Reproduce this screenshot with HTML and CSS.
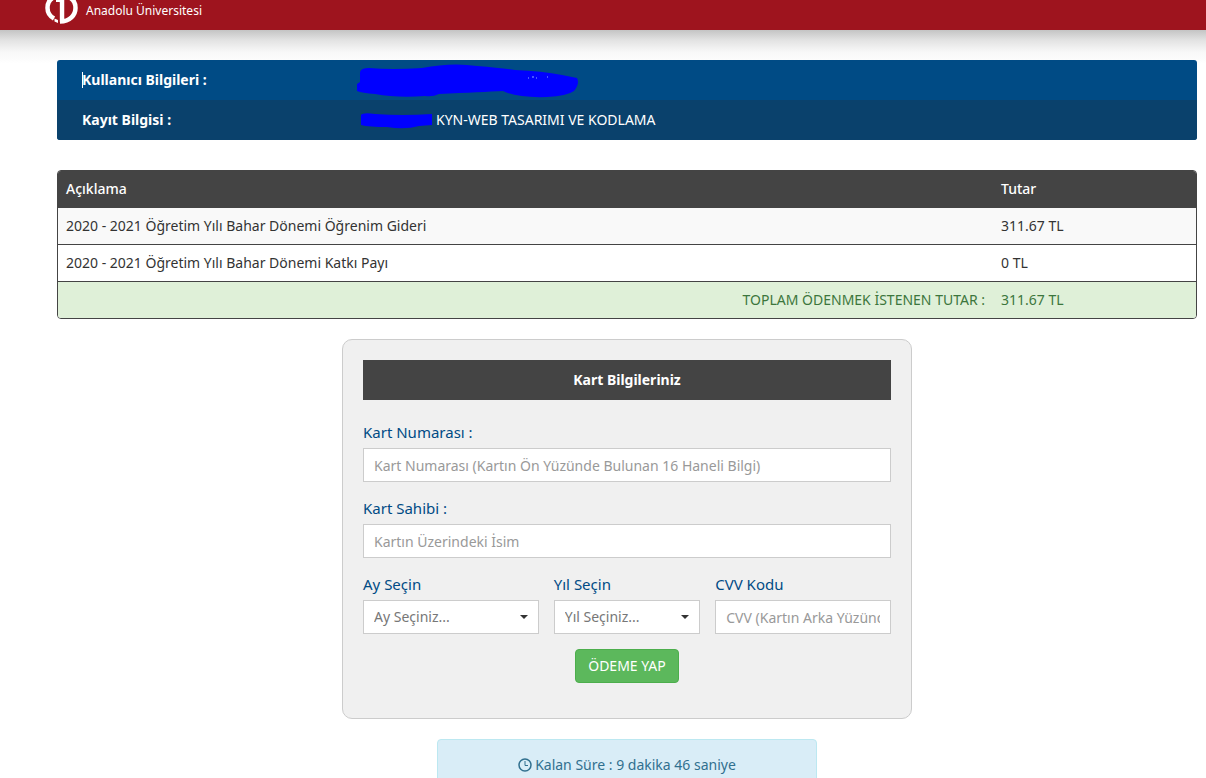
FILE: index.html
```html
<!DOCTYPE html>
<html lang="tr">
<head>
<meta charset="utf-8">
<meta name="viewport" content="width=device-width, initial-scale=1">
<title>Anadolu Üniversitesi</title>
<link rel="stylesheet" href="styles.css">
</head>
<body>
<header class="topbar">
  <svg class="logo" viewBox="0 0 34 24" aria-hidden="true">
    <g fill="none" stroke="#fff">
      <path d="M12 -4C5 -2 2.500 3 2.500 8C2.500 12 4.500 16 9 18.500" stroke-width="4.500"/>
      <path d="M21 -4C28 -2 30.500 3 30.500 8C30.500 15 25 21.500 15 21.500" stroke-width="4.500"/>
      <path d="M17 0V22" stroke-width="4.500"/>
      <path d="M11 1H16" stroke-width="2"/>
    </g>
    <path d="M9.500 18.500l3.500 1.500v3l-3.500-1.500z" fill="#fff"/>
    <path d="M13.800 3v21" stroke="#9e141e"/>
  </svg>
  <span class="brand">Anadolu Üniversitesi</span>
</header>

<main class="page">
  <dl class="info">
    <div class="info-row">
      <dt><span class="cursor"></span>Kullanıcı Bilgileri :</dt>
      <dd>
        <svg class="mark-long" viewBox="0 0 222 36" aria-hidden="true">
          <path d="M0 22L3 20L3 10Q4 6 12 6Q35 8 65 6Q95 0 120 4Q145 6 158 8Q185 9 205 13L220 16Q223 22 217 29Q210 34 190 35Q160 36 146 29Q125 30 82 32Q76 35 68 34Q40 36 18 32Q5 31 0 29Z" fill="#00f"/>
          <path d="M171 16h1m3-1h2m2 1h1m10-1h1" stroke="#8af"/>
        </svg>
      </dd>
    </div>
    <div class="info-row info-row-dark">
      <dt>Kayıt Bilgisi :</dt>
      <dd>
        <svg class="mark-short" viewBox="0 0 76 18" aria-hidden="true">
          <path d="M4 4Q6 1 18 3Q45 5 75 3L75 14L62 15Q48 19 30 16Q12 16 4 14Z" fill="#00f"/>
        </svg>
        <span>KYN-WEB TASARIMI VE KODLAMA</span>
      </dd>
    </div>
  </dl>

  <table class="fees">
    <thead>
      <tr><th scope="col">Açıklama</th><th scope="col" class="amount">Tutar</th></tr>
    </thead>
    <tbody>
      <tr class="striped"><td>2020 - 2021 Öğretim Yılı Bahar Dönemi Öğrenim Gideri</td><td>311.67 TL</td></tr>
      <tr><td>2020 - 2021 Öğretim Yılı Bahar Dönemi Katkı Payı</td><td>0 TL</td></tr>
    </tbody>
    <tfoot>
      <tr><td class="total-label">TOPLAM ÖDENMEK İSTENEN TUTAR :</td><td>311.67 TL</td></tr>
    </tfoot>
  </table>

  <form class="card">
    <h2 class="card-title">Kart Bilgileriniz</h2>
    <div class="field">
      <label for="number">Kart Numarası :</label>
      <input id="number" type="text" placeholder="Kart Numarası (Kartın Ön Yüzünde Bulunan 16 Haneli Bilgi)">
    </div>
    <div class="field">
      <label for="owner">Kart Sahibi :</label>
      <input id="owner" type="text" placeholder="Kartın Üzerindeki İsim">
    </div>
    <div class="field-row">
      <div class="field">
        <label for="month">Ay Seçin</label>
        <div class="select">
          <select id="month"><option>Ay Seçiniz...</option></select>
          <svg class="caret" viewBox="0 0 8 4" aria-hidden="true"><path d="M0 0H8L4 4Z" fill="#333"/></svg>
        </div>
      </div>
      <div class="field">
        <label for="year">Yıl Seçin</label>
        <div class="select">
          <select id="year"><option>Yıl Seçiniz...</option></select>
          <svg class="caret" viewBox="0 0 8 4" aria-hidden="true"><path d="M0 0H8L4 4Z" fill="#333"/></svg>
        </div>
      </div>
      <div class="field">
        <label for="cvv">CVV Kodu</label>
        <input id="cvv" type="text" placeholder="CVV (Kartın Arka Yüzünde Bulunan 3 Haneli Kod)">
      </div>
    </div>
    <button class="pay" type="button">ÖDEME YAP</button>
  </form>

  <div class="timer" role="status">
    <svg class="clock" viewBox="0 0 14 14" aria-hidden="true"><circle cx="7" cy="7" r="6" fill="none" stroke="#31708f" stroke-width="1.500"/><path d="M7 3V7.500H10" fill="none" stroke="#31708f"/></svg>
    <span>Kalan Süre : 9 dakika 46 saniye</span>
  </div>
</main>
</body>
</html>
```
FILE: styles.css
```css
* {
  box-sizing: border-box;
}

body {
  margin: 0;
  background: #fff;
  color: #333;
  font: 14px/20px "Noto Sans", "Open Sans", sans-serif;
}

.topbar {
  display: flex;
  align-items: flex-start;
  gap: 7px;
  height: 30px;
  padding-left: 45px;
  background: #9e141e;
  color: #fff;
}

.logo {
  width: 34px;
  height: 24px;
}

.brand {
  font-size: 12px;
  line-height: 22px;
}

.page {
  display: flex;
  flex-direction: column;
  padding: 30px 9px 20px 57px;
  background: linear-gradient(#c4c4c4, #e2e2e2 10px, #f8f8f8 22px, #fff 34px);
}

.info {
  position: relative;
  margin: 0 0 30px;
  overflow: hidden;
  border-radius: 3px;
  background: #004b85;
  color: #fff;
}

.info-row {
  display: grid;
  grid-template-columns: 1fr 3fr;
  align-items: center;
  height: 40px;
}

.info-row-dark {
  background: #0a416c;
}

.info dt {
  padding-left: 25px;
  font-weight: 700;
}

.cursor {
  position: absolute;
  width: 1px;
  height: 16px;
  margin-top: 2px;
  background: #fff;
}

.info dd {
  display: flex;
  align-items: center;
  gap: 3px;
  margin: 0;
  padding-left: 15px;
}

.mark-long {
  width: 222px;
  height: 36px;
}

.mark-short {
  width: 76px;
  height: 18px;
}

.fees {
  width: 100%;
  margin-bottom: 20px;
  overflow: hidden;
  border: 1px solid #444;
  border-radius: 4px;
  border-spacing: 0;
}

.fees th,
.fees td {
  padding: 8px;
  border-top: 1px solid #444;
  text-align: left;
}

.fees th {
  border-top: 0;
  background: #444;
  color: #fff;
  font-weight: 500;
}

.fees .striped td {
  background: #f9f9f9;
}

.fees .amount {
  width: 203px;
}

.fees tfoot td {
  background: #dff0d8;
  color: #3c763d;
}

.fees .total-label {
  text-align: right;
}

.card {
  display: flex;
  flex-direction: column;
  gap: 15px;
  align-self: center;
  width: 50%;
  margin-bottom: 20px;
  padding: 20px 20px 35px;
  border: 1px solid #ccc;
  border-radius: 10px;
  background: #f0f0f0;
}

.card-title {
  margin: 0 0 6px;
  padding: 10px;
  background: #444;
  color: #fff;
  font-size: 14px;
  line-height: 20px;
  text-align: center;
}

.field {
  min-width: 0;
}

.field label {
  display: block;
  margin-bottom: 5px;
  color: #004b85;
  font-size: 15px;
  line-height: 22px;
}

.field input,
.field select {
  display: block;
  width: 100%;
  height: 34px;
  padding: 6px 10px;
  border: 1px solid #ccc;
  border-radius: 0;
  background: #fff;
  color: #777;
  font: inherit;
}

.field input::placeholder {
  color: #999;
}

.field select {
  appearance: none;
}

.field-row {
  display: grid;
  grid-template-columns: 6fr 5fr 6fr;
  gap: 15px;
}

.select {
  position: relative;
}

.caret {
  position: absolute;
  top: 15px;
  right: 11px;
  width: 8px;
  height: 4px;
  pointer-events: none;
}

.pay {
  align-self: center;
  height: 34px;
  padding: 0 12px;
  border: 1px solid #4cae4c;
  border-radius: 4px;
  background: #5cb85c;
  color: #fff;
  font: inherit;
}

.timer {
  display: flex;
  justify-content: center;
  align-items: center;
  align-self: center;
  gap: 3px;
  width: 33.333%;
  padding: 15px;
  border: 1px solid #bce8f1;
  border-radius: 4px;
  background: #d9edf7;
  color: #31708f;
}

.clock {
  width: 14px;
  height: 14px;
}
```
